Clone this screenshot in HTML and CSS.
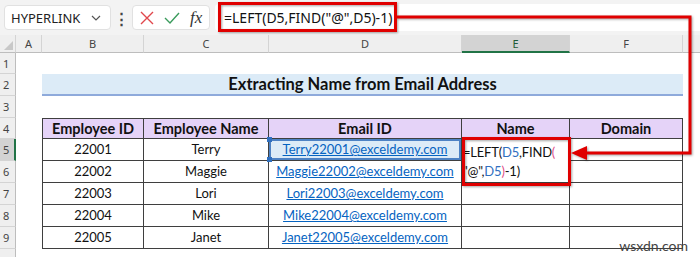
FILE: index.html
```html
<!DOCTYPE html>
<html lang="en">
<head>
    <meta charset="UTF-8">
    <title>Extracting Name from Email Address</title>
    <link rel="stylesheet" href="styles.css">
</head>
<body>
<div class="app">

  <!-- Name box + formula bar -->
  <div class="toolbar">
    <div class="namebox">
      <span>HYPERLINK</span>
      <svg class="chev" width="10" height="6" viewBox="0 0 10 6"><path d="M1 1 L5 5 L9 1" fill="none" stroke="#555" stroke-width="1.2"/></svg>
    </div>
    <div class="grip">&#8942;</div>
    <div class="fx-tools">
      <svg width="14" height="14" viewBox="0 0 14 14"><path d="M1 1 L13 13 M13 1 L1 13" stroke="#e0474c" stroke-width="1.4"/></svg>
      <svg width="16" height="14" viewBox="0 0 16 14"><path d="M1 7 L6 12 L15 2" fill="none" stroke="#3a9b5c" stroke-width="1.4"/></svg>
      <span class="fx">fx</span>
    </div>
    <div class="formula">=LEFT(D5,FIND("@",D5)-1)</div>
  </div>

  <!-- Worksheet -->
  <div class="sheet">
    <div class="corner"><span class="tri"></span></div>
    <div class="ch">A</div>
    <div class="ch">B</div>
    <div class="ch">C</div>
    <div class="ch">D</div>
    <div class="ch ch-active">E</div>
    <div class="ch">F</div>
    <div class="ch ch-last"></div>

    <div class="rh">1</div>
    <div class="blank span7"></div>

    <div class="rh">2</div>
    <div class="blank"></div>
    <div class="title">Extracting Name from Email Address</div>
    <div class="blank"></div>

    <div class="rh">3</div>
    <div class="blank span7"></div>

    <div class="rh">4</div>
    <div class="blank"></div>
    <div class="th first">Employee ID</div>
    <div class="th">Employee Name</div>
    <div class="th">Email ID</div>
    <div class="th">Name</div>
    <div class="th">Domain</div>
    <div class="blank"></div>

    <div class="rh rh-active">5</div>
    <div class="blank"></div>
    <div class="td first">22001</div>
    <div class="td">Terry</div>
    <div class="td ref"><span class="link">Terry22001@exceldemy.com</span><i class="h tl"></i><i class="h bl"></i></div>
    <div class="td edit">=LEFT(<span class="blue">D5</span>,FIND<span class="pink">(</span><br>"@",<span class="blue">D5</span><span class="pink">)</span>-1)</div>
    <div class="td"></div>
    <div class="blank"></div>

    <div class="rh">6</div>
    <div class="blank"></div>
    <div class="td first">22002</div>
    <div class="td">Maggie</div>
    <div class="td"><span class="link">Maggie22002@exceldemy.com</span></div>
    <div class="td"></div>
    <div class="blank"></div>

    <div class="rh">7</div>
    <div class="blank"></div>
    <div class="td first">22003</div>
    <div class="td">Lori</div>
    <div class="td"><span class="link">Lori22003@exceldemy.com</span></div>
    <div class="td"></div>
    <div class="td"></div>
    <div class="blank"></div>

    <div class="rh">8</div>
    <div class="blank"></div>
    <div class="td first">22004</div>
    <div class="td">Mike</div>
    <div class="td"><span class="link">Mike22004@exceldemy.com</span></div>
    <div class="td"></div>
    <div class="td"></div>
    <div class="blank"></div>

    <div class="rh">9</div>
    <div class="blank"></div>
    <div class="td first">22005</div>
    <div class="td">Janet</div>
    <div class="td"><span class="link">Janet22005@exceldemy.com</span></div>
    <div class="td"></div>
    <div class="td"></div>
    <div class="blank"></div>

    <div class="rh"></div>
    <div class="blank span7"></div>
  </div>

  <!-- red callouts drawn over the sheet -->
  <svg class="callouts" width="700" height="257" viewBox="0 0 700 257">
    <rect x="219.5" y="3.5" width="176" height="27" fill="none" stroke="#e00000" stroke-width="3"/>
    <polyline points="396,17 690,17 690,153 584,153" fill="none" stroke="#e00000" stroke-width="3"/>
    <polygon points="571,153 587,146 587,160" fill="#e00000"/>
    <rect x="463.5" y="138.5" width="106" height="46" fill="none" stroke="#e00000" stroke-width="3"/>
  </svg>

  <div class="watermark">wsxdn.com</div>
</div>
</body>
</html>
```

FILE: styles.css
```css
body {
    margin: 0;
    background: #ffffff;
    font-family: Lato, "Liberation Sans", sans-serif;
}
.app {
    position: relative;
    width: 700px;
    height: 257px;
    overflow: hidden;
}
.toolbar {
    display: flex;
    align-items: center;
    height: 35px;
    padding: 0 0 0 4px;
    box-sizing: border-box;
    background: #f3f3f3;
    font-family: "Noto Sans", sans-serif;
}
.namebox {
    display: flex;
    align-items: center;
    justify-content: space-between;
    width: 107px;
    height: 25px;
    box-sizing: border-box;
    padding: 0 9px 0 6px;
    background: #fff;
    border: 1px solid #e1e1e1;
    border-radius: 4px;
    font-size: 13px;
    color: #222;
}
.grip {
    width: 21px;
    text-align: center;
    font-size: 15px;
    font-weight: bold;
    color: #444;
}
.fx-tools {
    display: flex;
    align-items: center;
    gap: 10px;
    width: 78px;
    height: 25px;
    box-sizing: border-box;
    padding: 0 0 0 7px;
    background: #fff;
    border: 1px solid #e1e1e1;
    border-radius: 4px;
}
.fx {
    font-family: "Liberation Serif", serif;
    font-style: italic;
    font-size: 17px;
    color: #333;
}
.formula {
    flex: 1;
    height: 27px;
    margin-left: 5px;
    padding-left: 9px;
    line-height: 27px;
    background: #fff;
    border-radius: 4px 0 0 4px;
    font-size: 14px;
    color: #111;
}
.sheet {
    display: grid;
    grid-template-columns: 16px 26px 102px 125px 193px 108px 113px 1fr;
    grid-template-rows: 18px 21px 22px 22px 21px 22px 22px 22px 22px 22px 22px;
    font-size: 13px;
    color: #111;
}
.corner {
    position: relative;
    background: #efefef;
    border-right: 1px solid #d4d4d4;
    border-bottom: 1px solid #bdbdbd;
}
.tri {
    position: absolute;
    right: 2px;
    bottom: 2px;
    border-left: 9px solid transparent;
    border-bottom: 9px solid #c8c8c8;
}
.ch {
    background: #efefef;
    border-right: 1px solid #d4d4d4;
    border-bottom: 1px solid #bdbdbd;
    text-align: center;
    font-family: "Noto Sans", sans-serif;
    font-size: 11px;
    line-height: 17px;
    color: #444;
}
.ch-active {
    background: #d3d3d3;
    border-bottom: 2px solid #217346;
    color: #1e5a36;
}
.ch-last {
    border-right: none;
}
.rh {
    background: #efefef;
    border-right: 1px solid #bdbdbd;
    border-bottom: 1px solid #d4d4d4;
    font-family: "Noto Sans", sans-serif;
    font-size: 11px;
    color: #444;
    display: flex;
    align-items: center;
    padding-left: 3px;
}
.rh-active {
    background: #d3d3d3;
    border-right: 2px solid #217346;
}
.span7 {
    grid-column: span 7;
}
.title {
    grid-column: span 5;
    background: #dcebf7;
    border-bottom: 2px solid #8eaadb;
    text-align: center;
    font-weight: bold;
    font-size: 16.5px;
    line-height: 21px;
}
.th, .td {
    border-right: 1px solid #3f3f3f;
    border-bottom: 1px solid #3f3f3f;
    text-align: center;
    line-height: 21px;
    white-space: nowrap;
}
.th {
    background: #e5d3f8;
    border-top: 1px solid #3f3f3f;
    font-weight: bold;
    font-size: 14.5px;
    line-height: 19px;
}
.first {
    border-left: 1px solid #3f3f3f;
}
.link {
    color: #0563c1;
    text-decoration: underline;
}
.ref {
    position: relative;
    background: #dcebf7;
    box-shadow: inset 0 0 0 2px #4d82c4;
}
.h {
    position: absolute;
    width: 5px;
    height: 5px;
    background: #2f6fbf;
}
.tl {
    left: -2px;
    top: -2px;
}
.bl {
    left: -2px;
    bottom: -2px;
}
.edit {
    grid-row: span 2;
    background: #fff;
    text-align: left;
    white-space: nowrap;
    padding: 4px 1px 0;
    line-height: 19px;
    letter-spacing: -0.2px;
}
.blue {
    color: #2f6fc0;
}
.pink {
    color: #e0508a;
}
.callouts {
    position: absolute;
    left: 0;
    top: 0;
    pointer-events: none;
    filter: drop-shadow(1px 1px 1px rgba(0, 0, 0, 0.35));
}
.watermark {
    position: absolute;
    right: 12px;
    bottom: 3px;
    font-size: 14px;
    color: #444;
}
```
